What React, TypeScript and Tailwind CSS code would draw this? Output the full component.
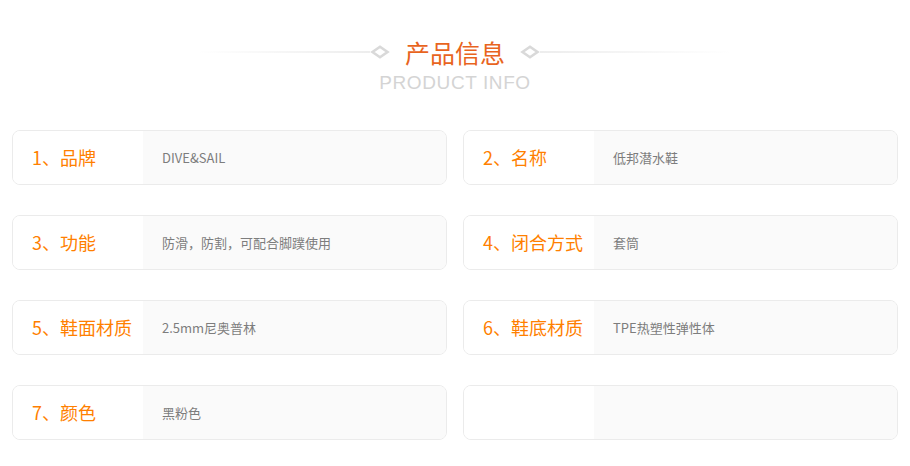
const items: { label: string; value: string }[] = [
  { label: '1、品牌', value: 'DIVE&SAIL' },
  { label: '2、名称', value: '低邦潜水鞋' },
  { label: '3、功能', value: '防滑，防割，可配合脚蹼使用' },
  { label: '4、闭合方式', value: '套筒' },
  { label: '5、鞋面材质', value: '2.5mm尼奥普林' },
  { label: '6、鞋底材质', value: 'TPE热塑性弹性体' },
  { label: '7、颜色', value: '黑粉色' },
  { label: '', value: '' },
];

function Diamond() {
  return (
    <svg width="20" height="14" viewBox="0 0 20 14" className="shrink-0">
      <path d="M10 1.8 L17.5 7 L10 12.2 L2.5 7 Z" fill="none" stroke="#d9d9d9" strokeWidth="2.6" />
    </svg>
  );
}

export default function App() {
  return (
    <div
      className="w-[910px] h-[466px] bg-white overflow-hidden"
      style={{ fontFamily: '"Microsoft YaHei", "Noto Sans CJK SC", sans-serif' }}
    >
      <div className="flex flex-col items-center pt-[37px]">
        <div className="flex items-center ml-[19px]">
          <div className="w-[173px] h-[2px] bg-gradient-to-r from-transparent to-[#ededed]" />
          <Diamond />
          <span className="mx-[15px] text-[25px] leading-[30px] text-[#e8641e]">产品信息</span>
          <Diamond />
          <div className="w-[192px] h-[2px] bg-gradient-to-l from-transparent to-[#ededed]" />
        </div>
        <div
          className="mt-[4px] text-[19px] leading-[24px] tracking-[0.6px] text-[#d4d4d4]"
          style={{ fontFamily: '"Liberation Sans", Arial, sans-serif' }}
        >
          PRODUCT INFO
        </div>
      </div>

      <div className="grid grid-cols-2 gap-x-[16px] gap-y-[30px] px-[12px] mt-[35px]">
        {items.map((it, i) => (
          <div
            key={i}
            className="flex h-[55px] rounded-[8px] border border-[#ebebeb] overflow-hidden"
          >
            <div className="w-[130px] shrink-0 bg-white flex items-center pl-[19px] text-[18px] text-[#ff7f00]">
              {it.label}
            </div>
            <div className="flex-1 bg-[#fafafa] flex items-center pl-[19px] text-[13px] text-[#7d7d7d]">
              {it.value}
            </div>
          </div>
        ))}
      </div>
    </div>
  );
}
